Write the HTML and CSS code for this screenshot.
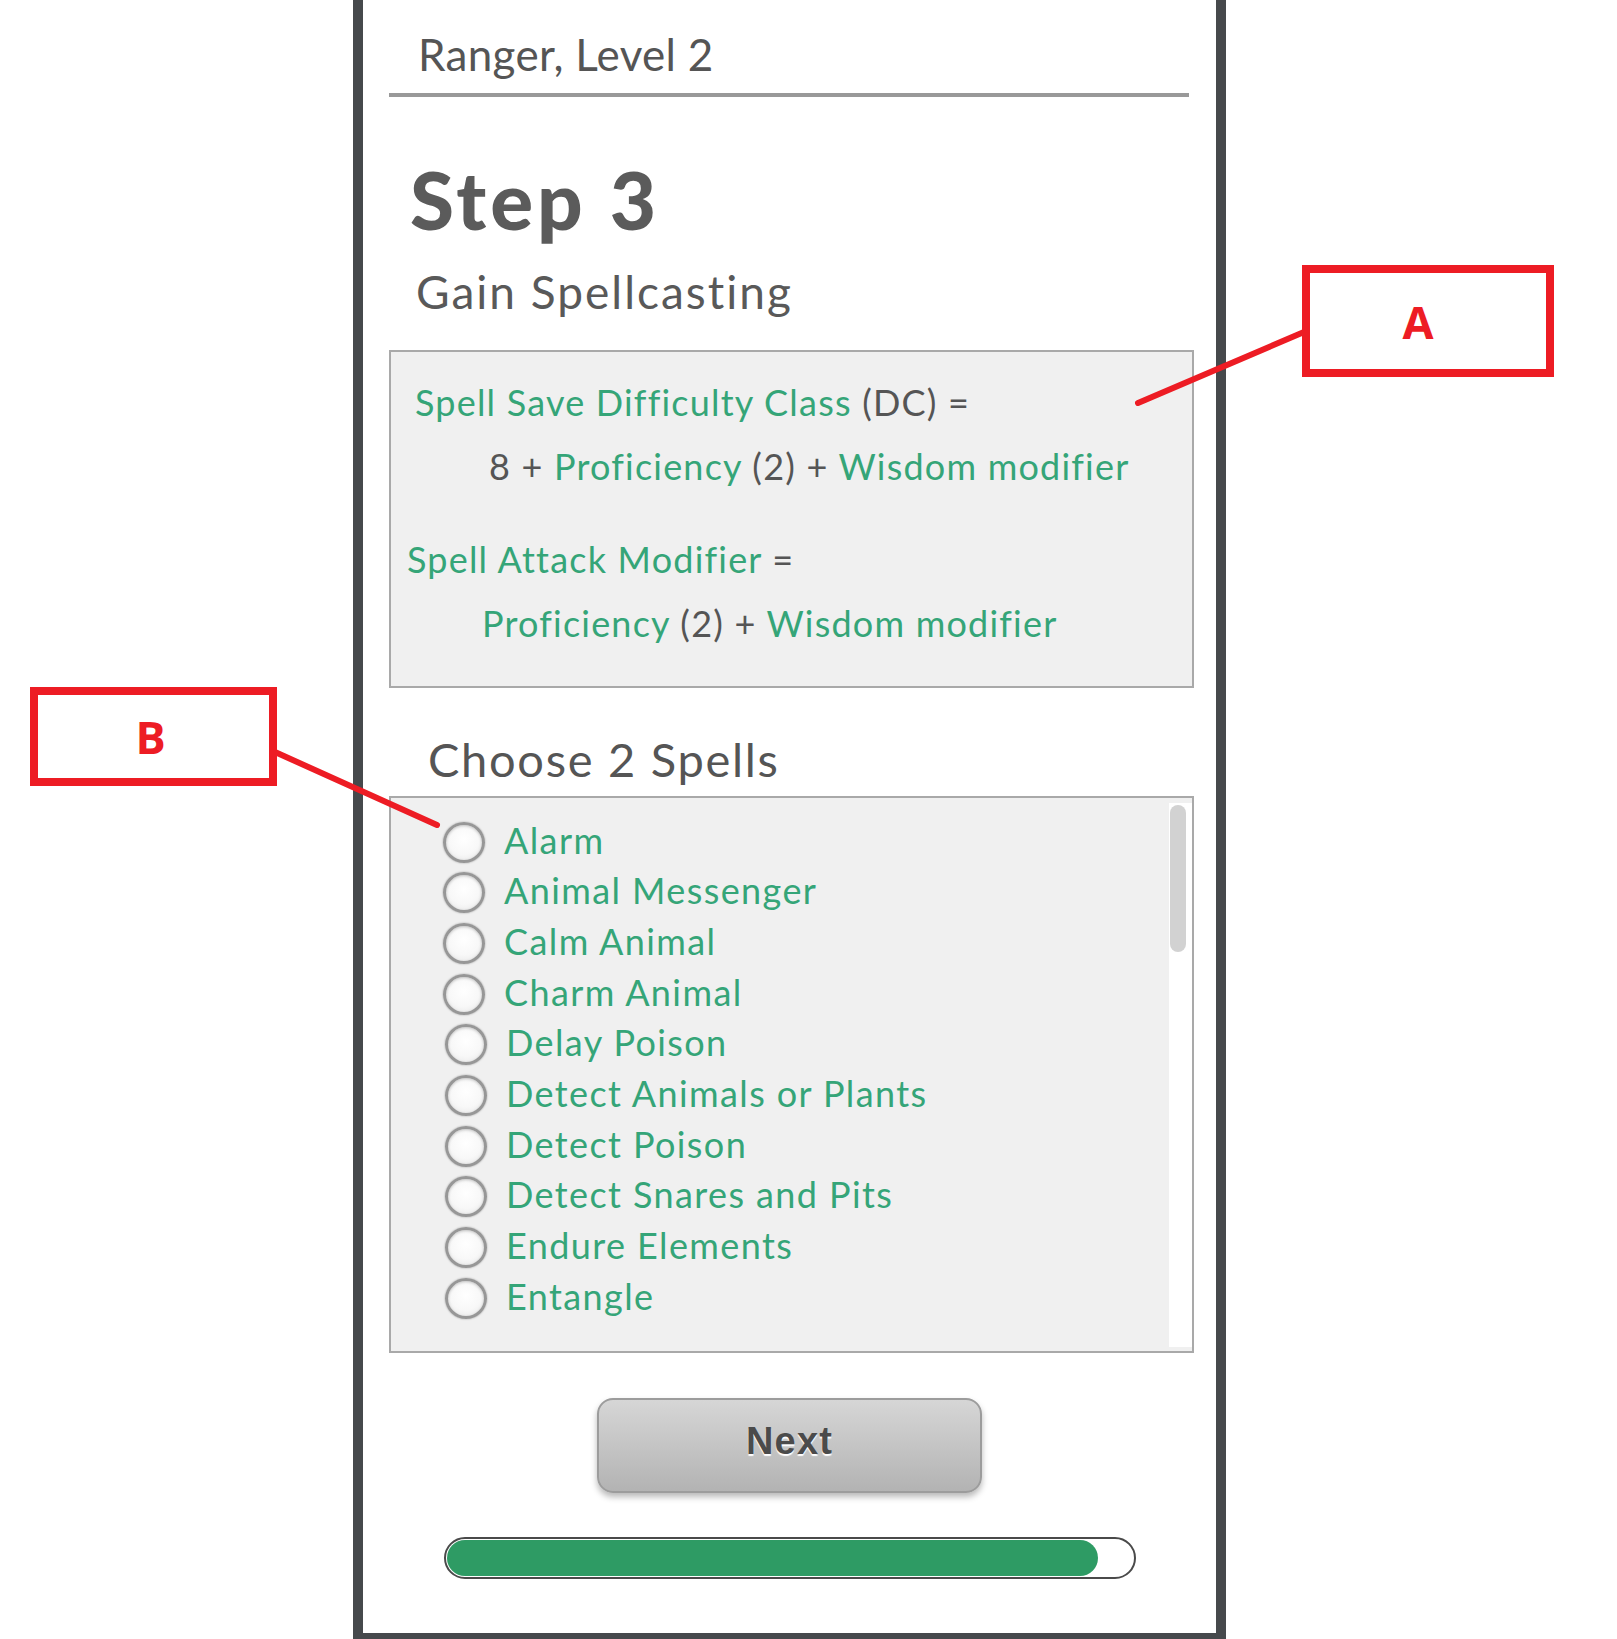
FILE: index.html
```html
<!DOCTYPE html>
<html lang="en">
<head>
<meta charset="utf-8">
<title>Ranger, Level 2 – Step 3</title>
<link rel="stylesheet" href="styles.css">
</head>
<body>
<div class="page">
  <div class="panel">
    <div class="hdr">Ranger, Level 2</div>
    <h1 class="step">Step 3</h1>
    <div class="sub">Gain Spellcasting</div>

    <div class="formula">
      <div class="fl l1"><span class="g">Spell Save Difficulty Class</span> (DC) =</div>
      <div class="fl l2">8 + <span class="g">Proficiency</span> (2) + <span class="g">Wisdom modifier</span></div>
      <div class="fl l3"><span class="g">Spell Attack Modifier</span> =</div>
      <div class="fl l4"><span class="g">Proficiency</span> (2) + <span class="g">Wisdom modifier</span></div>
    </div>

    <div class="choose">Choose 2 Spells</div>
    <div class="spells">
      <ul class="list">
        <li><span class="radio"></span><span class="name">Alarm</span></li>
        <li><span class="radio"></span><span class="name">Animal Messenger</span></li>
        <li><span class="radio"></span><span class="name">Calm Animal</span></li>
        <li><span class="radio"></span><span class="name">Charm Animal</span></li>
        <li class="sh"><span class="radio"></span><span class="name">Delay Poison</span></li>
        <li class="sh"><span class="radio"></span><span class="name">Detect Animals or Plants</span></li>
        <li class="sh"><span class="radio"></span><span class="name">Detect Poison</span></li>
        <li class="sh"><span class="radio"></span><span class="name">Detect Snares and Pits</span></li>
        <li class="sh"><span class="radio"></span><span class="name">Endure Elements</span></li>
        <li class="sh"><span class="radio"></span><span class="name">Entangle</span></li>
      </ul>
      <div class="track"><div class="thumb"></div></div>
    </div>

    <div class="btnrow"><button class="next">Next</button></div>
    <div class="progress"><div class="fill" style="width:95%"></div></div>
  </div>

  <svg class="leaders" width="1617" height="1639" viewBox="0 0 1617 1639">
    <line x1="1138" y1="403" x2="1304" y2="332"/>
    <line x1="275" y1="752" x2="437" y2="825"/>
  </svg>
  <div class="note note-a">A</div>
  <div class="note note-b">B</div>
</div>
</body>
</html>
```

FILE: styles.css
```css
* { box-sizing: border-box; }
html, body { margin: 0; padding: 0; background: #fff; }
body {
  font-family: Lato, "Open Sans", sans-serif;
  color: #555;
  font-variant-ligatures: none;
  font-feature-settings: "liga" 0, "clig" 0;
}

.page { position: relative; width: 1617px; height: 1639px; overflow: hidden; }

.panel {
  margin-left: 353px;
  width: 873px;
  height: 1639px;
  border-left: 10px solid #46494c;
  border-right: 10px solid #46494c;
  border-bottom: 6px solid #46494c;
  background: #fff;
  display: flex;
  flex-direction: column;
}

.hdr {
  margin: 0 27px 0 26px;
  padding: 24px 0 9px 29px;
  font-size: 44px;
  line-height: 60px;
  letter-spacing: 0.3px;
  color: #555;
  border-bottom: 4px solid #999;
}

.step {
  margin: 57px 0 0 0;
  padding-left: 47px;
  font-size: 80px;
  line-height: 90px;
  font-weight: 900;
  letter-spacing: 4px;
  color: #5b5b5b;
}

.sub {
  margin-top: 20px;
  padding-left: 53px;
  font-size: 46px;
  line-height: 56px;
  letter-spacing: 2px;
  color: #595959;
}

.formula {
  margin: 30px 22px 0 26px;
  height: 338px;
  border: 2px solid #a9a9a9;
  background: #f0f0f0;
  padding-top: 18px;
}
.fl { font-size: 36px; line-height: 64px; letter-spacing: 1.2px; color: #555; white-space: nowrap; }
.l1 { padding-left: 24px; }
.l2 { padding-left: 98px; }
.l3 { padding-left: 16px; margin-top: 29px; }
.l4 { padding-left: 91px; }
.g { color: #35a578; }

.choose {
  margin-top: 43px;
  padding-left: 65px;
  font-size: 47px;
  line-height: 56px;
  letter-spacing: 1.7px;
  color: #555;
}

.spells {
  margin: 9px 22px 0 26px;
  height: 557px;
  border: 2px solid #a9a9a9;
  background: #f0f0f0;
  display: flex;
}
.list {
  flex: 1;
  list-style: none;
  margin: 0;
  padding: 19px 0 0 52px;
}
.list li {
  height: 50.67px;
  display: flex;
  align-items: center;
}
.list li.sh { padding-left: 2px; }
.radio {
  width: 42px;
  height: 41px;
  border-radius: 50%;
  border: 3.5px solid #979797;
  background: radial-gradient(circle at 50% 40%, #ffffff 0%, #f8f8f8 55%, #e4e4e4 100%);
  box-shadow: inset 0 1px 3px rgba(0,0,0,0.22), 0 0 2px rgba(0,0,0,0.35);
  flex: none;
}
.name {
  margin-left: 19px;
  font-size: 36px;
  line-height: 46px;
  letter-spacing: 1.4px;
  padding-bottom: 5px;
  color: #35a578;
  white-space: nowrap;
}
.track {
  width: 23px;
  margin: 5px 0 4px;
  background: #fff;
  padding: 2px 6px 0 1px;
}
.thumb {
  width: 16px;
  height: 147px;
  border-radius: 8px;
  background: #d2d2d2;
}

.btnrow {
  margin-top: 45px;
  display: flex;
  justify-content: center;
}
.next {
  width: 385px;
  height: 95px;
  border: 2px solid #9c9c9c;
  border-radius: 16px;
  background: linear-gradient(#d6d6d6, #b3b3b3);
  box-shadow: 0 4px 6px rgba(0,0,0,0.28);
  font-family: "Liberation Sans", Arial, sans-serif;
  font-weight: 700;
  font-size: 38px;
  letter-spacing: 1.2px;
  color: #4b4b4b;
  text-shadow: 0 2px 1px #fff;
  padding: 0 0 8px 0;
}

.progress {
  margin: 44px auto 0;
  width: 692px;
  height: 42px;
  border: 2px solid #4a4a4a;
  border-radius: 21px;
  background: #fff;
  overflow: hidden;
  padding: 1px;
}
.fill {
  height: 100%;
  border-radius: 20px;
  background: #2e9b64;
}

.leaders { position: absolute; left: 0; top: 0; pointer-events: none; }
.leaders line { stroke: #ed1c24; stroke-width: 6; stroke-linecap: round; }

.note {
  position: absolute;
  border: 8px solid #ed1c24;
  background: #fff;
  color: #ed1c24;
  font-family: "Open Sans", "Liberation Sans", sans-serif;
  font-weight: 700;
  font-size: 45px;
  display: flex;
  align-items: center;
  justify-content: center;
  line-height: 1;
}
.note-a { left: 1302px; top: 265px; width: 252px; height: 112px; padding-right: 20px; }
.note-b { left: 30px; top: 687px; width: 247px; height: 99px; padding-right: 6px; }
```
